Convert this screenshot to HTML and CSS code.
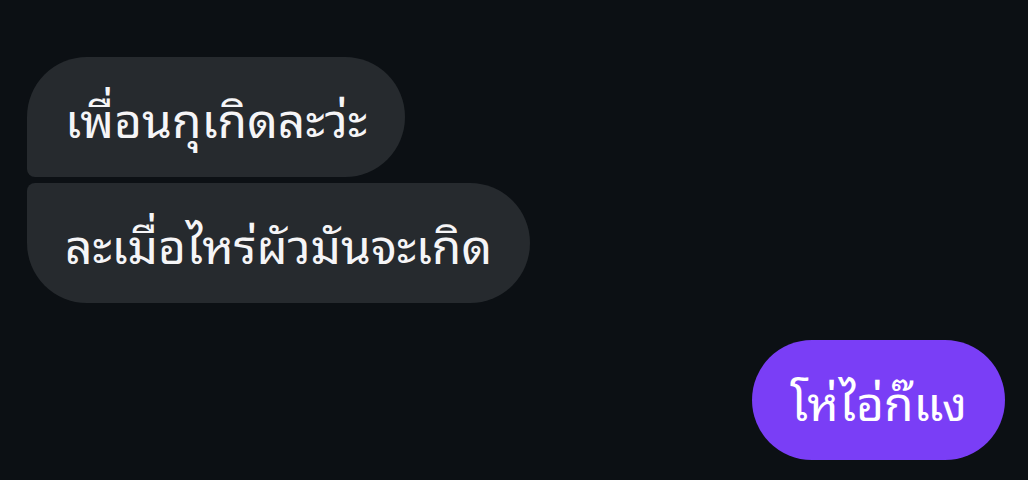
FILE: index.html
```html
<!DOCTYPE html>
<html lang="th">
<head>
<meta charset="utf-8">
<link rel="stylesheet" href="styles.css">
</head>
<body>
<div class="chat">
  <div class="group in">
    <div class="bubble first">เพื่อนกุเกิดละว่ะ</div>
    <div class="bubble last">ละเมื่อไหร่ผัวมันจะเกิด</div>
  </div>
  <div class="group out">
    <div class="bubble single">โห่ไอ่ก๊แง</div>
  </div>
</div>
</body>
</html>
```
FILE: styles.css
```css
html, body {
  margin: 0;
  padding: 0;
  background: #0c1014;
  width: 1028px;
  height: 480px;
  overflow: hidden;
}
.chat {
  display: flex;
  flex-direction: column;
  padding: 57px 23px 0 27px;
  gap: 37px;
  font-family: "Noto Sans Thai Looped", "Noto Sans Thai", "Noto Sans", sans-serif;
}
.group {
  display: flex;
  flex-direction: column;
  gap: 6px;
}
.group.in { align-items: flex-start; }
.group.out { align-items: flex-end; }
.bubble {
  box-sizing: border-box;
  height: 120px;
  display: flex;
  align-items: center;
  padding: 0 38px 2px;
  font-size: 48px;
  color: #f5f5f7;
  background: #262a2e;
  border-radius: 60px;
  white-space: nowrap;
}
.bubble.first { border-bottom-left-radius: 8px; }
.bubble.last { border-top-left-radius: 8px; }
.out .bubble { background: #7a3ef6; color: #fff; }
```
